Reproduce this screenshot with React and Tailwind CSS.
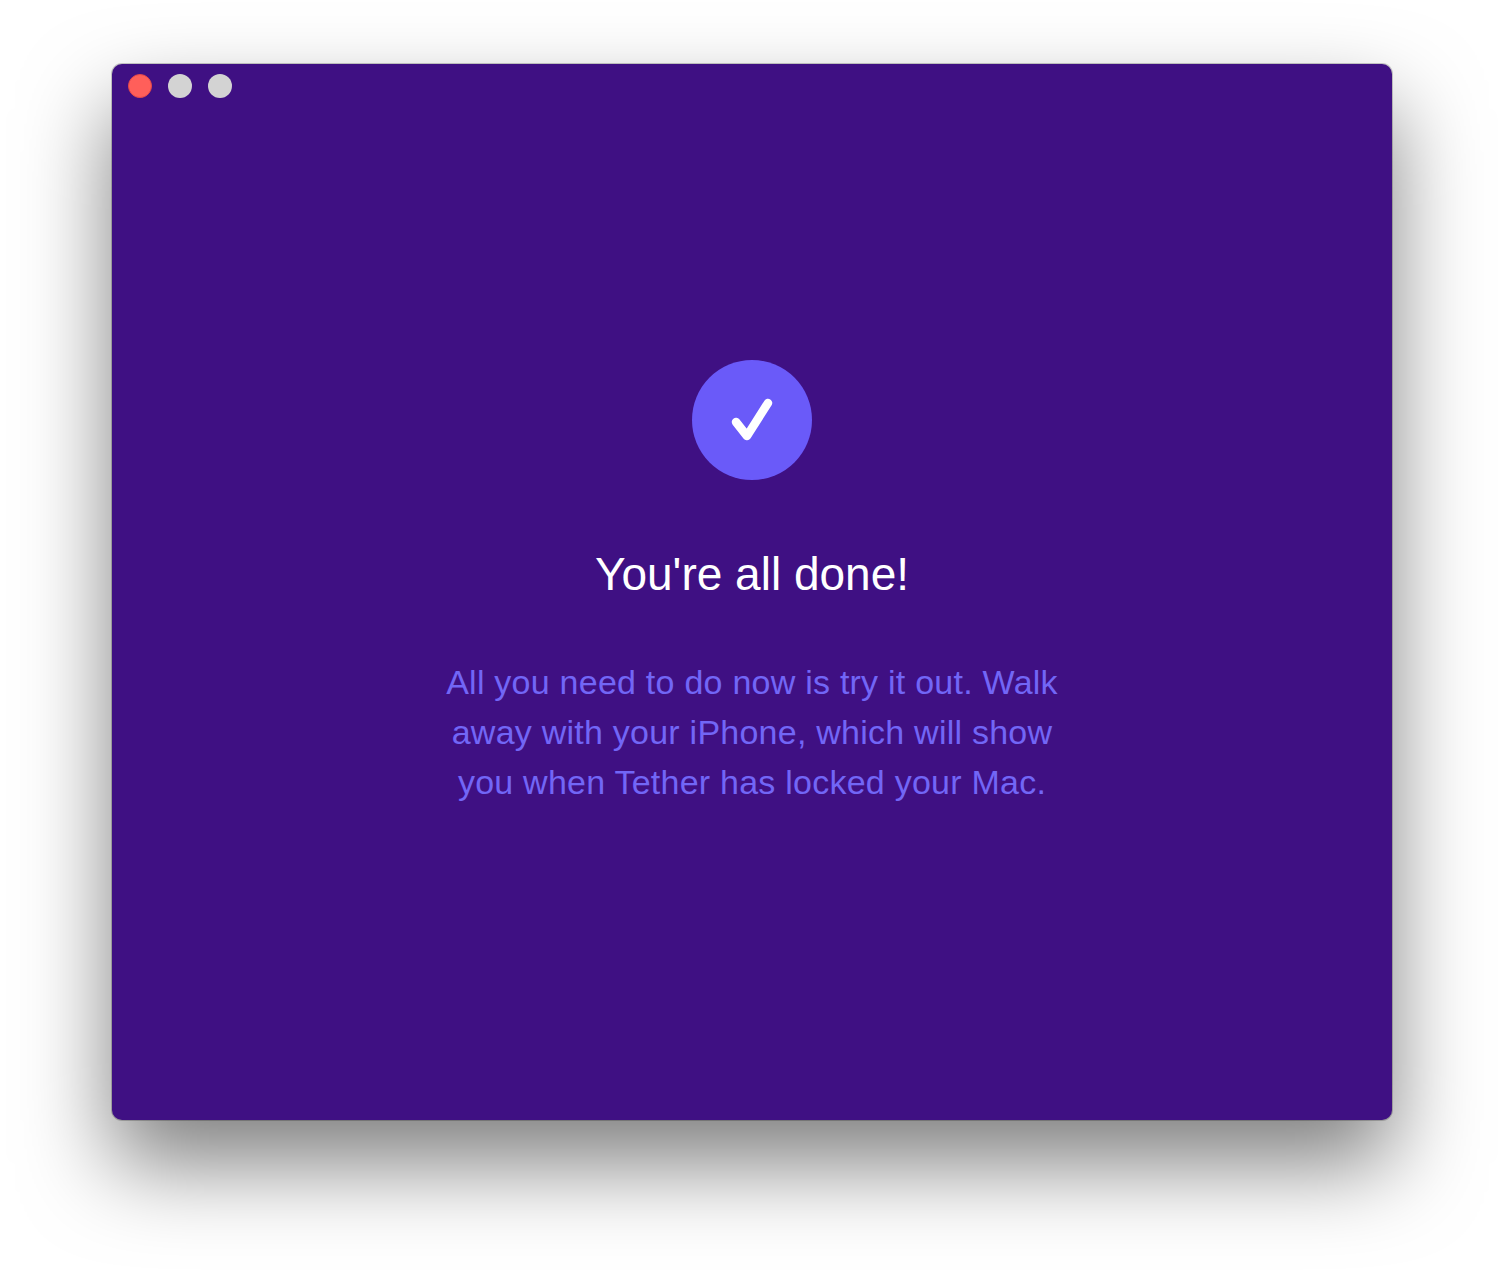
const font = { fontFamily: '"Liberation Sans", Arial, sans-serif' };

function TrafficLights() {
  return (
    <div className="flex gap-4 pl-4 pt-2.5">
      <span className="h-6 w-6 rounded-full border border-[#e5484a] bg-[#ff5f5a]" />
      <span className="h-6 w-6 rounded-full bg-[#d3d3d3]" />
      <span className="h-6 w-6 rounded-full bg-[#d3d3d3]" />
    </div>
  );
}

export default function App() {
  return (
    <div className="h-[1280px] overflow-hidden bg-white px-[112px] pt-16" style={font}>
      <div className="h-[1056px] rounded-[10px] bg-[#3f1083] shadow-[0_44px_88px_0_rgba(0,0,0,0.5),0_0_0_1px_rgba(0,0,0,0.2)]">
        <TrafficLights />
        <div className="flex flex-col items-center pt-[262px]">
          <div className="flex h-[120px] w-[120px] items-center justify-center rounded-full bg-[#6a5af9]">
            <svg width="120" height="120" viewBox="0 0 120 120" fill="none">
              <path d="M44 62 L55 76 L76 43" stroke="#fff" strokeWidth="8.5" strokeLinecap="round" strokeLinejoin="round" />
            </svg>
          </div>
          <h1 className="mt-[64px] text-[46px] leading-[60px] font-normal text-white">You're all done!</h1>
          <p className="mt-[53px] w-[680px] text-center text-[34px] leading-[50px] tracking-[0.24px] text-[#7266f6]">
            All you need to do now is try it out. Walk
            <br />
            away with your iPhone, which will show
            <br />
            you when Tether has locked your Mac.
          </p>
        </div>
      </div>
    </div>
  );
}
